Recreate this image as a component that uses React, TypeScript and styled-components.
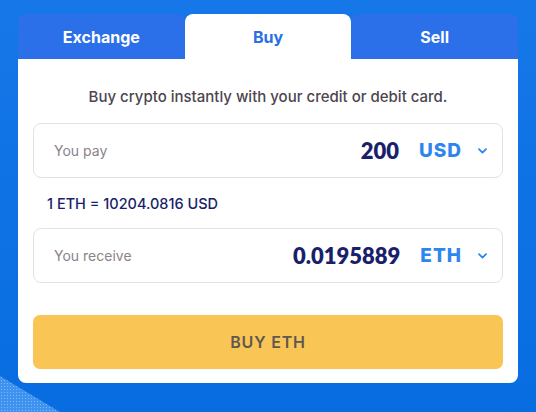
import React, { useState } from 'react';
import styled, { createGlobalStyle } from 'styled-components';

const GlobalStyle = createGlobalStyle`
  html, body {
    margin: 0;
    padding: 0;
  }
  body {
    font-family: "Inter", "Noto Sans", sans-serif;
    -webkit-font-smoothing: antialiased;
  }
`;

type TabKey = 'exchange' | 'buy' | 'sell';

const tabs: { key: TabKey; label: string }[] = [
  { key: 'exchange', label: 'Exchange' },
  { key: 'buy', label: 'Buy' },
  { key: 'sell', label: 'Sell' },
];

const Chevron: React.FC = () => (
  <ChevronIcon width="9" height="6" viewBox="0 0 9 6" fill="none">
    <path d="M1 1.2L4.5 4.6L8 1.2" stroke="#2d86ee" strokeWidth="1.8" strokeLinecap="round" strokeLinejoin="round" />
  </ChevronIcon>
);

const App: React.FC = () => {
  const [active, setActive] = useState<TabKey>('buy');

  return (
    <Page>
      <GlobalStyle />
      <Corner />
      <Widget>
        <TabBar>
          {tabs.map((t) => (
            <Tab key={t.key} active={t.key === active} onClick={() => setActive(t.key)}>
              {t.label}
            </Tab>
          ))}
        </TabBar>
        <Card>
          <Subtitle>Buy crypto instantly with your credit or debit card.</Subtitle>
          <Field>
            <FieldLabel>You pay</FieldLabel>
            <Amount>200</Amount>
            <Currency>USD</Currency>
            <Chevron />
          </Field>
          <Rate>1 ETH = 10204.0816 USD</Rate>
          <Field>
            <FieldLabel>You receive</FieldLabel>
            <Amount>0.0195889</Amount>
            <Currency>ETH</Currency>
            <Chevron />
          </Field>
          <BuyButton>BUY ETH</BuyButton>
        </Card>
      </Widget>
    </Page>
  );
};

export default App;

// ============================================================================
// STYLED COMPONENTS
// ============================================================================

const Page = styled.div`
  position: relative;
  overflow: hidden;
  box-sizing: border-box;
  min-height: 412px;
  padding: 14px 18px 0;
  background: linear-gradient(180deg, #1677e8 0%, #076de0 100%);
`;

const Corner = styled.div`
  position: absolute;
  left: 0;
  bottom: 0;
  width: 60px;
  height: 36px;
  background-color: #3f93f0;
  background-image: radial-gradient(rgba(255, 255, 255, 0.35) 0.6px, transparent 0.9px);
  background-size: 3px 3px;
  clip-path: polygon(0 0, 100% 100%, 0 100%);
`;

const Widget = styled.div`
  position: relative;
  width: 500px;
`;

const TabBar = styled.div`
  display: grid;
  grid-template-columns: repeat(3, 1fr);
  height: 45px;
`;

const Tab = styled.button<{ active: boolean }>`
  border: none;
  margin: 0;
  padding: 0;
  border-radius: 8px 8px 0 0;
  font-family: "Inter", sans-serif;
  font-size: 16px;
  font-weight: 700;
  cursor: pointer;
  background-color: ${({ active }) => (active ? '#ffffff' : '#2b70e9')};
  color: ${({ active }) => (active ? '#2a6fe3' : '#ffffff')};
`;

const Card = styled.div`
  display: flex;
  flex-direction: column;
  background-color: #ffffff;
  border-radius: 0 0 8px 8px;
  padding: 28px 15px 14px;
`;

const Subtitle = styled.div`
  text-align: center;
  font-size: 15px;
  line-height: 20px;
  font-weight: 500;
  color: #4d4450;
  margin-bottom: 16px;
`;

const Field = styled.div`
  display: flex;
  align-items: center;
  box-sizing: border-box;
  height: 55px;
  padding: 0 15px 0 20px;
  border: 1px solid #e2e2e9;
  border-radius: 8px;
`;

const FieldLabel = styled.span`
  flex: 1;
  font-size: 14px;
  font-weight: 400;
  color: #8b8389;
`;

const Amount = styled.span`
  font-family: "Lato", sans-serif;
  font-size: 22px;
  font-weight: 800;
  color: #1a1f6b;
`;

const Currency = styled.span`
  margin-left: 20px;
  font-size: 19px;
  font-weight: 800;
  letter-spacing: 1px;
  color: #2d86ee;
`;

const ChevronIcon = styled.svg`
  margin-left: 16px;
  flex-shrink: 0;
`;

const Rate = styled.div`
  display: flex;
  align-items: center;
  height: 50px;
  padding-left: 14px;
  font-size: 14.5px;
  font-weight: 500;
  color: #1a1f6b;
`;

const BuyButton = styled.button`
  margin-top: 32px;
  height: 54px;
  border: none;
  border-radius: 7px;
  background-color: #f9c656;
  font-family: "Inter", sans-serif;
  font-size: 16px;
  font-weight: 600;
  letter-spacing: 0.8px;
  color: #5f5850;
  cursor: pointer;
`;
